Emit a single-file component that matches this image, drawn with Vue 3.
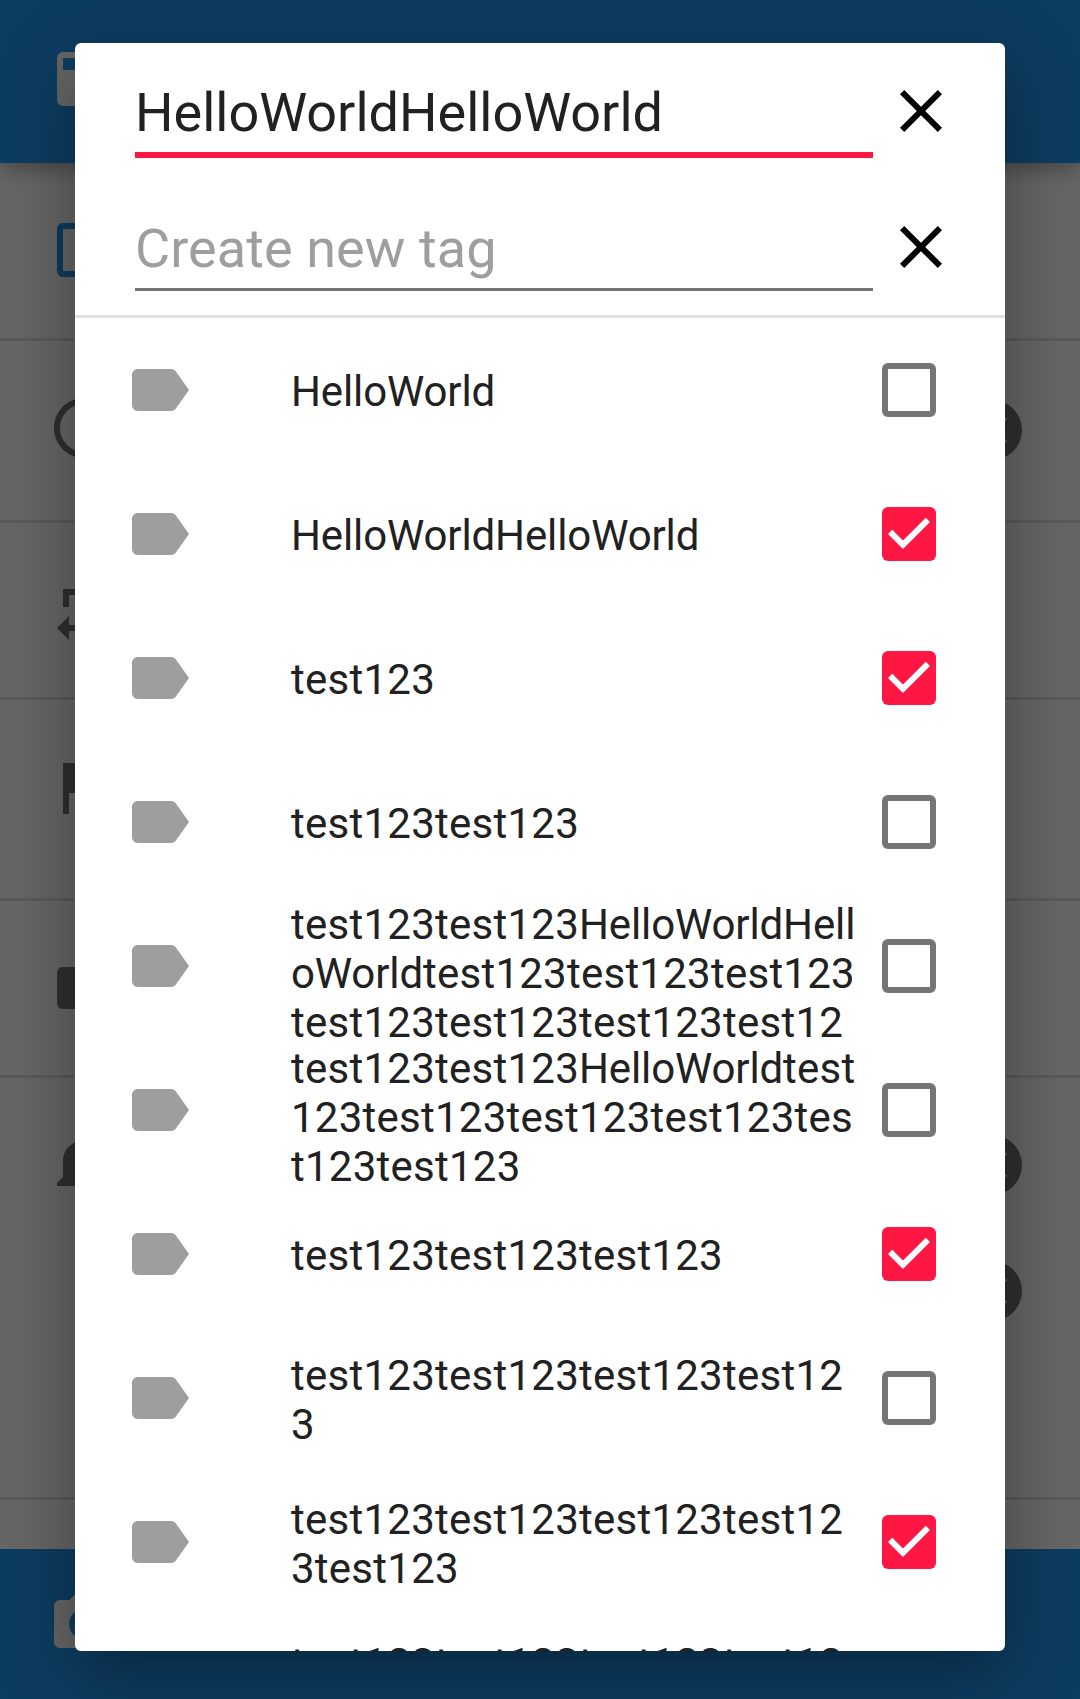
<script setup>
const tags = [
  { name: 'HelloWorld', checked: false },
  { name: 'HelloWorldHelloWorld', checked: true },
  { name: 'test123', checked: true },
  { name: 'test123test123', checked: false },
  { name: 'test123test123HelloWorldHell\noWorldtest123test123test123\ntest123test123test123test12', checked: false },
  { name: 'test123test123HelloWorldtest\n123test123test123test123tes\nt123test123', checked: false },
  { name: 'test123test123test123', checked: true },
  { name: 'test123test123test123test12\n3', checked: false },
  { name: 'test123test123test123test12\n3test123', checked: true },
  { name: 'test123test123test123test12\n3', checked: false },
]
// Words and numbered parts of a name are tracked differently
const parts = (name) => name.split(/((?:Hello|World|Hell\n|oWorld)+)/).filter(Boolean)
const isWord = (part) => /^(Hell|oWorld|World)/.test(part)

const rows = [
  { icon: 'box', height: 178 },
  { icon: 'clock', height: 182, clear: true },
  { icon: 'repeat', height: 177 },
  { icon: 'flag', height: 201 },
  { icon: 'label', height: 177 },
  { icon: 'bell', height: 177, clear: true },
  { icon: '', height: 245, clear: true },
]
const icons = {
  box: 'M19 5v14H5V5h14m0-2H5c-1.100 0-2 .9-2 2v14c0 1.100.9 2 2 2h14c1.100 0 2-.9 2-2V5c0-1.100-.9-2-2-2z',
  clock: 'M11.990 2C6.470 2 2 6.480 2 12s4.470 10 9.990 10C17.520 22 22 17.520 22 12S17.520 2 11.990 2zM12 20a8 8 0 1 1 0-16 8 8 0 0 1 0 16zm.5-13H11v6l5.250 3.150.75-1.230-4.500-2.670z',
  repeat: 'M7 7h10v3l4-4-4-4v3H5v6h2zM17 17H7v-3l-4 4 4 4v-3h12v-6h-2z',
  flag: 'M14.400 6L14 4H5v17h2v-7h5.600l.4 2h7V6z',
  label: 'M17.630 5.840C17.270 5.330 16.670 5 16 5L5 5.010C3.900 5.010 3 5.900 3 7v10c0 1.100.9 1.990 2 1.990L16 19c.67 0 1.270-.33 1.630-.84L22 12z',
  bell: 'M12 22c1.100 0 2-.9 2-2h-4a2 2 0 0 0 2 2zm6-6v-5c0-3.070-1.640-5.640-4.500-6.320V4a1.500 1.500 0 0 0-3 0v.68C7.630 5.360 6 7.920 6 11v5l-2 2v1h16v-1z',
}
icons.bell = 'M12 22a2 2 0 0 0 2-2h-4a2 2 0 0 0 2 2zm7-6v-5.500c0-3.070-2.130-5.640-5-6.320V3.500a2 2 0 0 0-4 0v.68c-2.870.68-5 3.250-5 6.320V16l-2 2v1h18v-1z'
</script>

<template>
  <div class="screen">
    <div class="page">
      <header class="toolbar">
        <svg class="save" viewBox="0 0 24 24"><path fill-rule="evenodd" d="M5 3h14a2 2 0 0 1 2 2v14a2 2 0 0 1-2 2H5a2 2 0 0 1-2-2V5a2 2 0 0 1 2-2zM5 5v4h14V5z" /></svg>
      </header>
      <main class="rows">
        <div v-for="(row, i) in rows" :key="i" class="row" :class="row.icon || 'plain'" :style="{ height: row.height + 'px' }">
          <svg class="ico" viewBox="0 0 24 24"><path v-if="row.icon" :d="icons[row.icon]" /></svg>
          <svg v-if="row.clear" class="clear" viewBox="0 0 24 24"><path d="M12 2a10 10 0 1 0 0 20 10 10 0 0 0 0-20zm5 13.590L15.590 17 12 13.410 8.410 17 7 15.590 10.590 12 7 8.410 8.410 7 12 10.590 15.590 7 17 8.410 13.410 12z" /></svg>
        </div>
      </main>
      <footer class="bottom">
        <svg class="camera" viewBox="0 0 24 24"><path fill-rule="evenodd" d="M9 2L7.170 4H4c-1.100 0-2 .9-2 2v12c0 1.100.9 2 2 2h16c1.100 0 2-.9 2-2V6c0-1.100-.9-2-2-2h-3.170L15 2zm3 15a5 5 0 1 1 0-10 5 5 0 0 1 0 10z" /><circle cx="12" cy="12" r="3.200" /></svg>
      </footer>
    </div>
    <div class="scrim">
      <section class="dialog">
        <div class="form">
          <div class="field">
            <div class="input focused">HelloWorldHelloWorld</div>
            <svg class="x" viewBox="0 0 24 24"><path d="M19 6.410L17.590 5 12 10.590 6.410 5 5 6.410 10.590 12 5 17.590 6.410 19 12 13.410 17.590 19 19 17.590 13.410 12z" /></svg>
          </div>
          <div class="field">
            <div class="input hint">Create new tag</div>
            <svg class="x" viewBox="0 0 24 24"><path d="M19 6.410L17.590 5 12 10.590 6.410 5 5 6.410 10.590 12 5 17.590 6.410 19 12 13.410 17.590 19 19 17.590 13.410 12z" /></svg>
          </div>
        </div>
        <ul class="tags">
          <li v-for="(tag, i) in tags" :key="i" class="tag">
            <svg class="tag-icon" viewBox="0 0 24 24"><path :d="icons.label" /></svg>
            <div class="name"><span v-for="(part, p) in parts(tag.name)" :key="p" :class="{ word: isWord(part) }">{{ part }}</span></div>
            <span class="check" :class="{ on: tag.checked }">
              <svg v-if="tag.checked" viewBox="0 0 18 18"><path d="M7 14L2 9l1.410-1.410L7 11.170l7.590-7.590L16 5z" /></svg>
            </span>
          </li>
        </ul>
      </section>
    </div>
  </div>
</template>

<style>
body { margin: 0; }
</style>

<style scoped>
.screen {
  position: relative;
  width: 1080px;
  height: 1699px;
  overflow: hidden;
  font-family: Roboto, sans-serif;
}
svg { display: block; flex: none; }
.page { display: flex; flex-direction: column; height: 100%; background: #fff; }
.toolbar {
  position: relative;
  z-index: 1;
  display: flex;
  align-items: flex-start;
  flex: none;
  height: 163px;
  background: #2196f3;
  box-shadow: 0 4px 22px rgba(0, 0, 0, .36);
}
.save, .camera { width: 72px; height: 72px; fill: #fff; }
.save { margin: 43px 0 0 48px; }
.rows { flex: 1; overflow: hidden; }
.row {
  box-sizing: border-box;
  display: flex;
  align-items: flex-start;
  justify-content: space-between;
  padding: 51px 52px 0 48px;
  border-bottom: 3px solid #e0e0e0;
}
.row svg { width: 72px; height: 72px; fill: #757575; }
.row.box svg { fill: #2196f3; }
.row.clock .clear { margin-top: 2px; }
.row.bell { border-bottom: 0; }
.row.plain { padding-top: 0; }
.bottom { flex: none; display: flex; height: 150px; background: #2196f3; }
.camera { margin: 39px 0 0 48px; }
.scrim {
  position: absolute;
  inset: 0;
  z-index: 2;
  box-sizing: border-box;
  padding: 43px 75px 48px;
  background: rgba(0, 0, 0, .6);
}
.dialog {
  display: flex;
  flex-direction: column;
  height: 1608px;
  border-radius: 6px;
  background: #fff;
  box-shadow: 0 24px 75px rgba(0, 0, 0, .36);
  overflow: hidden;
}
.form {
  box-sizing: border-box;
  flex: none;
  height: 275px;
  padding-top: 32px;
  border-bottom: 3px solid #e0e0e0;
}
.field { display: flex; height: 136px; padding-left: 60px; }
.input {
  box-sizing: border-box;
  width: 738px;
  height: 80px;
  padding-top: 6px;
  border-bottom: 3px solid #757575;
  color: #212121;
  font-size: 54px;
  line-height: 64px;
  white-space: nowrap;
}
.input.hint { color: #9e9e9e; letter-spacing: .08px; }
.input.focused { height: 83px; border-bottom: 6px solid #ff1744; }
.x { width: 72px; height: 72px; margin: 0 0 0 12px; }
.tags { flex: 1; margin: 0; padding: 0; list-style: none; overflow: hidden; }
.tag {
  display: flex;
  align-items: center;
  height: 144px;
  padding-left: 48px;
}
.tag-icon { width: 72px; height: 72px; fill: #9e9e9e; }
.name {
  box-sizing: border-box;
  width: 582px;
  max-height: 144px;
  margin-left: 96px;
  padding: 6px 0 3px;
  color: #212121;
  font-size: 42px;
  line-height: 49px;
  letter-spacing: .25px;
  white-space: pre;
}
.word { letter-spacing: -.12px; }
.check {
  box-sizing: border-box;
  flex: none;
  width: 54px;
  height: 54px;
  margin-left: 9px;
  border: 6px solid #757575;
  border-radius: 6px;
}
.check.on { border: 0; background: #ff1744; }
.check svg { width: 54px; height: 54px; fill: #fff; }
</style>
